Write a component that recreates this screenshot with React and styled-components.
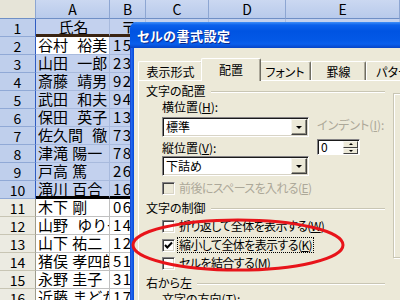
import styled, { createGlobalStyle } from "styled-components";

const GlobalStyle = createGlobalStyle`
  *, *::before, *::after { box-sizing: border-box; }
  html, body { margin: 0; padding: 0; background: #fff; }
  body {
    overflow: hidden;
    font-family: "Noto Sans CJK JP", "Noto Sans", sans-serif;
  }
`;

const Screen = styled.div`
  position: relative;
  width: 400px;
  height: 300px;
  overflow: hidden;
  background: #fff;
`;

/* ---------- spreadsheet ---------- */

const Sheet = styled.div`
  display: grid;
  grid-template-columns: 36px 74px 36px 63px 77px 114px;
  grid-template-rows: 19px repeat(16, 18px);
  font-family: "Noto Sans CJK JP", sans-serif;
  color: #000;
`;

const Corner = styled.div`
  background: #e6e4d8;
  border-right: 1px solid #8da6d2;
  border-bottom: 1px solid #6f8fc6;
`;

const ColHead = styled.div`
  display: flex;
  align-items: center;
  justify-content: center;
  font-size: 14px;
  background: linear-gradient(#cbd8f1, #b8caeb);
  border-right: 1px solid #8da6d2;
  border-bottom: 1px solid #6f8fc6;
`;

const RowHead = styled.div`
  display: flex;
  align-items: center;
  justify-content: center;
  font-size: 14px;
  background: ${(p) => (p.$sel ? "#bfcfec" : "#ecebe2")};
  border-right: 1px solid ${(p) => (p.$sel ? "#2f5cc2" : "#9c9a8c")};
  border-bottom: 1px solid ${(p) => (p.$sel ? "#90a9d6" : "#c8c5b4")};
`;

const Cell = styled.div`
  padding-left: ${(p) => (p.$num ? 3 : 2)}px;
  font-size: 15px;
  line-height: 16px;
  white-space: nowrap;
  overflow: hidden;
  text-align: ${(p) => (p.$center ? "center" : "left")};
  letter-spacing: ${(p) => (p.$num ? "1.5px" : "0")};
  word-spacing: ${(p) => (p.$wide ? "6px" : "1px")};
  background: ${(p) => (p.$sel && !p.$active ? "#c3d1ee" : "#fff")};
  border-right: 1px solid ${(p) => (p.$sel ? "#a8badd" : "#c0c0c0")};
  border-bottom: ${(p) =>
    p.$rule ? `3px solid ${p.$rule}` : `1px solid ${p.$sel ? "#a8badd" : "#c0c0c0"}`};
`;

const cols = ["A", "B", "C", "D", "E"];

const rows = [
  { n: 1, a: "氏名", b: "〒" },
  { n: 2, a: "谷村 裕美", wide: true, b: "150-0013" },
  { n: 3, a: "山田 一郎", wide: true, b: "231-0005" },
  { n: 4, a: "斎藤 靖男", wide: true, b: "921-8032" },
  { n: 5, a: "武田 和夫", wide: true, b: "940-0062" },
  { n: 6, a: "保田 英子", wide: true, b: "130-0011" },
  { n: 7, a: "佐久間 徹", wide: true, b: "730-0042" },
  { n: 8, a: "津滝 陽一", b: "780-0870" },
  { n: 9, a: "戸高 篤", b: "260-0013" },
  { n: 10, a: "滝川 百合", b: "160-0023" },
  { n: 11, a: "木下 剛", b: "060-0001" },
  { n: 12, a: "山野 ゆり子", wide: true, b: "141-0031" },
  { n: 13, a: "山下 祐二", b: "120-0034" },
  { n: 14, a: "猪俣 孝四郎", b: "514-0004" },
  { n: 15, a: "永野 圭子", b: "310-0015" },
  { n: 16, a: "近藤 まどか", b: "170-0013" },
];

function ruleFor(n) {
  if (n === 1) return "#3a2412";
  if (n === 10) return "#000";
  return null;
}

const Spreadsheet = () => (
  <Sheet>
    <Corner />
    {cols.map((c) => (
      <ColHead key={c}>{c}</ColHead>
    ))}
    {rows.map((r) => {
      const sel = r.n <= 10;
      const rule = ruleFor(r.n);
      return [
        <RowHead key={`h${r.n}`} $sel={sel}>{r.n}</RowHead>,
        <Cell key={`a${r.n}`} $sel={sel} $active={r.n === 2} $rule={rule} $wide={r.wide} $center={r.n === 1}>
          {r.a}
        </Cell>,
        <Cell key={`b${r.n}`} $sel={sel} $rule={rule} $center={r.n === 1} $num={r.n > 1}>
          {r.b}
        </Cell>,
        <Cell key={`c${r.n}`} $sel={sel} $rule={rule} />,
        <Cell key={`d${r.n}`} $sel={sel} $rule={rule} />,
        <Cell key={`e${r.n}`} $sel={sel} $rule={rule} />,
      ];
    })}
  </Sheet>
);

/* ---------- dialog window ---------- */

const Dialog = styled.div`
  position: absolute;
  left: 130px;
  top: 22px;
  width: 290px;
  height: 300px;
  display: flex;
  flex-direction: column;
  border-radius: 7px 7px 0 0;
  background: linear-gradient(90deg, #0a2db4 0, #2a6cf2 1px, #0c55e4 3px, #0848d0 4px);
  font-family: "Noto Sans CJK JP", sans-serif;
  font-feature-settings: "palt";
  color: #000;
`;

const TitleBar = styled.div`
  flex: none;
  height: 26px;
  display: flex;
  align-items: center;
  padding: 0 0 0 7px;
  border-radius: 7px 7px 0 0;
  color: #fff;
  font-size: 13px;
  font-weight: bold;
  letter-spacing: 0.5px;
  text-shadow: 1px 1px 0 #0b2a8f;
  background: linear-gradient(
    180deg,
    #3f8ff8 0,
    #0b61ec 3px,
    #0054e2 9px,
    #0358e6 18px,
    #0a5fec 22px,
    #0644c6 26px
  );
`;

const Body = styled.div`
  flex: 1;
  margin-left: 4px;
  padding: 10px 0 0 4px;
  display: flex;
  flex-direction: column;
  background: #ece9d8;
`;

const TabStrip = styled.div`
  display: flex;
  align-items: flex-end;
  height: 22px;
  flex: none;
`;

const Tab = styled.div`
  flex: none;
  width: ${(p) => p.$w}px;
  height: ${(p) => (p.$active ? 23 : 19)}px;
  margin: ${(p) => (p.$active ? "0 -2px -1px -2px" : "0")};
  position: relative;
  z-index: ${(p) => (p.$active ? 1 : 0)};
  display: flex;
  align-items: center;
  justify-content: center;
  padding-bottom: ${(p) => (p.$active ? 2 : 0)}px;
  font-size: 12px;
  background: #ece9d8;
  border-top: 1px solid #fff;
  border-left: 1px solid #fff;
  border-right: 1px solid #6f6d62;
  border-radius: 2px 2px 0 0;
  box-shadow: inset -1px 0 #aca899;
`;

const Pane = styled.div`
  flex: 1;
  display: flex;
  padding-left: 7px;
  background: #ece9d8;
  border-top: 1px solid #fff;
  border-left: 1px solid #fff;
`;

const MainCol = styled.div`
  width: 239px;
  flex: none;
  display: flex;
  flex-direction: column;
`;

const OrientBox = styled.div`
  flex: none;
  width: 60px;
  height: 165px;
  margin: 12px 0 0 8px;
  border: 1px solid #c9c6b4;
  box-shadow: 1px 1px 0 #fff, inset 1px 1px 0 #fff;
`;

const GroupHead = styled.div`
  display: flex;
  align-items: center;
  height: 14px;
  margin-top: ${(p) => p.$mt}px;
  font-size: 12px;
  line-height: 14px;
  &::after {
    content: "";
    flex: 1;
    height: 2px;
    margin: 2px 0 0 5px;
    border-top: 1px solid #c9c6b4;
    border-bottom: 1px solid #fff;
  }
`;

const FieldLabel = styled.div`
  height: 14px;
  margin-top: ${(p) => p.$mt || 0}px;
  margin-left: ${(p) => p.$ml || 0}px;
  font-size: 12px;
  line-height: 14px;
  white-space: nowrap;
  color: ${(p) => (p.$off ? "#aca899" : "#000")};
`;

const AlignArea = styled.div`
  display: flex;
  gap: 8px;
  margin-left: 16px;
`;

const FieldCol = styled.div`
  display: flex;
  flex-direction: column;
  width: ${(p) => (p.$w ? `${p.$w}px` : "auto")};
  margin-top: ${(p) => p.$mt || 0}px;
`;

const Select = styled.div`
  display: flex;
  height: 20px;
  margin-top: ${(p) => p.$mt}px;
  background: #fff;
  border: 1px solid;
  border-color: #848284 #fff #fff #848284;
  box-shadow: inset 1px 1px 0 #1a1a1a, inset -1px -1px 0 #d8d4c6;
`;

const SelectValue = styled.div`
  flex: 1;
  padding: 1px 0 0 3px;
  font-size: 12px;
  line-height: 16px;
`;

const ArrowButton = styled.div`
  flex: none;
  width: 16px;
  margin: 1px 1px 1px 0;
  display: flex;
  align-items: center;
  justify-content: center;
  background: #ece9d8;
  border: 1px solid;
  border-color: #f6f5ef #404040 #404040 #f6f5ef;
  box-shadow: inset -1px -1px 0 #8e8c80;
`;

const Triangle = styled.span`
  width: 0;
  height: 0;
  border-left: ${(p) => p.$s}px solid transparent;
  border-right: ${(p) => p.$s}px solid transparent;
  ${(p) => (p.$up ? "border-bottom" : "border-top")}: ${(p) => p.$s}px solid #000;
`;

const Spin = styled.div`
  display: flex;
  width: 43px;
  height: 16px;
  margin-top: 7px;
  background: #fff;
  border: 1px solid;
  border-color: #848284 #fff #fff #848284;
  box-shadow: inset 1px 1px 0 #1a1a1a;
`;

const SpinValue = styled.div`
  flex: 1;
  padding-left: 3px;
  font-size: 12px;
  line-height: 14px;
`;

const SpinButtons = styled.div`
  flex: none;
  width: 16px;
  display: flex;
  flex-direction: column;
  padding: 1px 1px 0 0;
`;

const SpinButton = styled.div`
  flex: 1;
  display: flex;
  align-items: center;
  justify-content: center;
  background: #ece9d8;
  border: 1px solid;
  border-color: #f6f5ef #404040 #404040 #f6f5ef;
`;

const CheckRow = styled.div`
  display: flex;
  align-items: center;
  height: 16px;
  margin: ${(p) => p.$mt}px 0 0 16px;
  font-size: 12px;
  color: ${(p) => (p.$off ? "#aca899" : "#000")};
`;

const Box = styled.div`
  flex: none;
  width: 13px;
  height: 13px;
  margin-right: 2px;
  display: flex;
  align-items: center;
  justify-content: center;
  background: ${(p) => (p.$off ? "#ece9d8" : "#fff")};
  border: 1px solid;
  border-color: #848284 #fff #fff #848284;
  box-shadow: inset 1px 1px 0 #404040, inset -1px -1px 0 #d8d4c6;
`;

const CheckText = styled.span`
  padding: 0 1px;
  line-height: 14px;
  letter-spacing: -0.6px;
  white-space: nowrap;
  border: 1px ${(p) => (p.$focus ? "dotted #000" : "solid transparent")};
`;

const Mark = styled.svg`
  display: block;
`;

const Check = ({ label, k, checked, off, focus, mt }) => (
  <CheckRow $mt={mt} $off={off}>
    <Box $off={off}>
      {checked && (
        <Mark width="9" height="9" viewBox="0 0 9 9">
          <path d="M1 4 L3.3 6.5 L8 1.5" fill="none" stroke="#000" strokeWidth="2" />
        </Mark>
      )}
    </Box>
    <CheckText $focus={focus}>
      {label}(<u>{k}</u>)
    </CheckText>
  </CheckRow>
);

const tabs = [
  { label: "表示形式", w: 65 },
  { label: "配置", w: 60, active: true },
  { label: "フォント", w: 52 },
  { label: "罫線", w: 55 },
  { label: "パターン", w: 64 },
];

const FormatDialog = () => (
  <Dialog>
    <TitleBar>セルの書式設定</TitleBar>
    <Body>
      <TabStrip>
        {tabs.map((t) => (
          <Tab key={t.label} $w={t.w} $active={t.active}>
            {t.label}
          </Tab>
        ))}
      </TabStrip>
      <Pane>
        <MainCol>
          <GroupHead $mt={3}>文字の配置</GroupHead>
          <AlignArea>
            <FieldCol $w={147}>
              <FieldLabel $mt={2}>
                横位置(<u>H</u>):
              </FieldLabel>
              <Select $mt={3}>
                <SelectValue>標準</SelectValue>
                <ArrowButton>
                  <Triangle $s={3.5} />
                </ArrowButton>
              </Select>
              <FieldLabel $mt={4}>
                縦位置(<u>V</u>):
              </FieldLabel>
              <Select $mt={1}>
                <SelectValue>下詰め</SelectValue>
                <ArrowButton>
                  <Triangle $s={3.5} />
                </ArrowButton>
              </Select>
            </FieldCol>
            <FieldCol $mt={20}>
              <FieldLabel $off>
                インデント(<u>I</u>):
              </FieldLabel>
              <Spin>
                <SpinValue>0</SpinValue>
                <SpinButtons>
                  <SpinButton>
                    <Triangle $s={2} $up />
                  </SpinButton>
                  <SpinButton>
                    <Triangle $s={2} />
                  </SpinButton>
                </SpinButtons>
              </Spin>
            </FieldCol>
          </AlignArea>
          <Check mt={4} off label="前後にスペースを入れる" k="E" />
          <GroupHead $mt={5}>文字の制御</GroupHead>
          <Check mt={3} label="折り返して全体を表示する" k="W" />
          <Check mt={3} checked focus label="縮小して全体を表示する" k="K" />
          <Check mt={2} label="セルを結合する" k="M" />
          <GroupHead $mt={5}>右から左</GroupHead>
          <FieldLabel $mt={2} $ml={16}>
            文字の方向(<u>T</u>):
          </FieldLabel>
        </MainCol>
        <OrientBox />
      </Pane>
    </Body>
  </Dialog>
);

/* ---------- red annotation ---------- */

const Annotation = styled.svg`
  position: absolute;
  left: 0;
  top: 0;
  pointer-events: none;
`;

export default function App() {
  return (
    <Screen>
      <GlobalStyle />
      <Spreadsheet />
      <FormatDialog />
      <Annotation width="400" height="300" viewBox="0 0 400 300">
        <ellipse cx="238" cy="245" rx="105" ry="25" fill="none" stroke="#e8141a" strokeWidth="3" />
      </Annotation>
    </Screen>
  );
}
